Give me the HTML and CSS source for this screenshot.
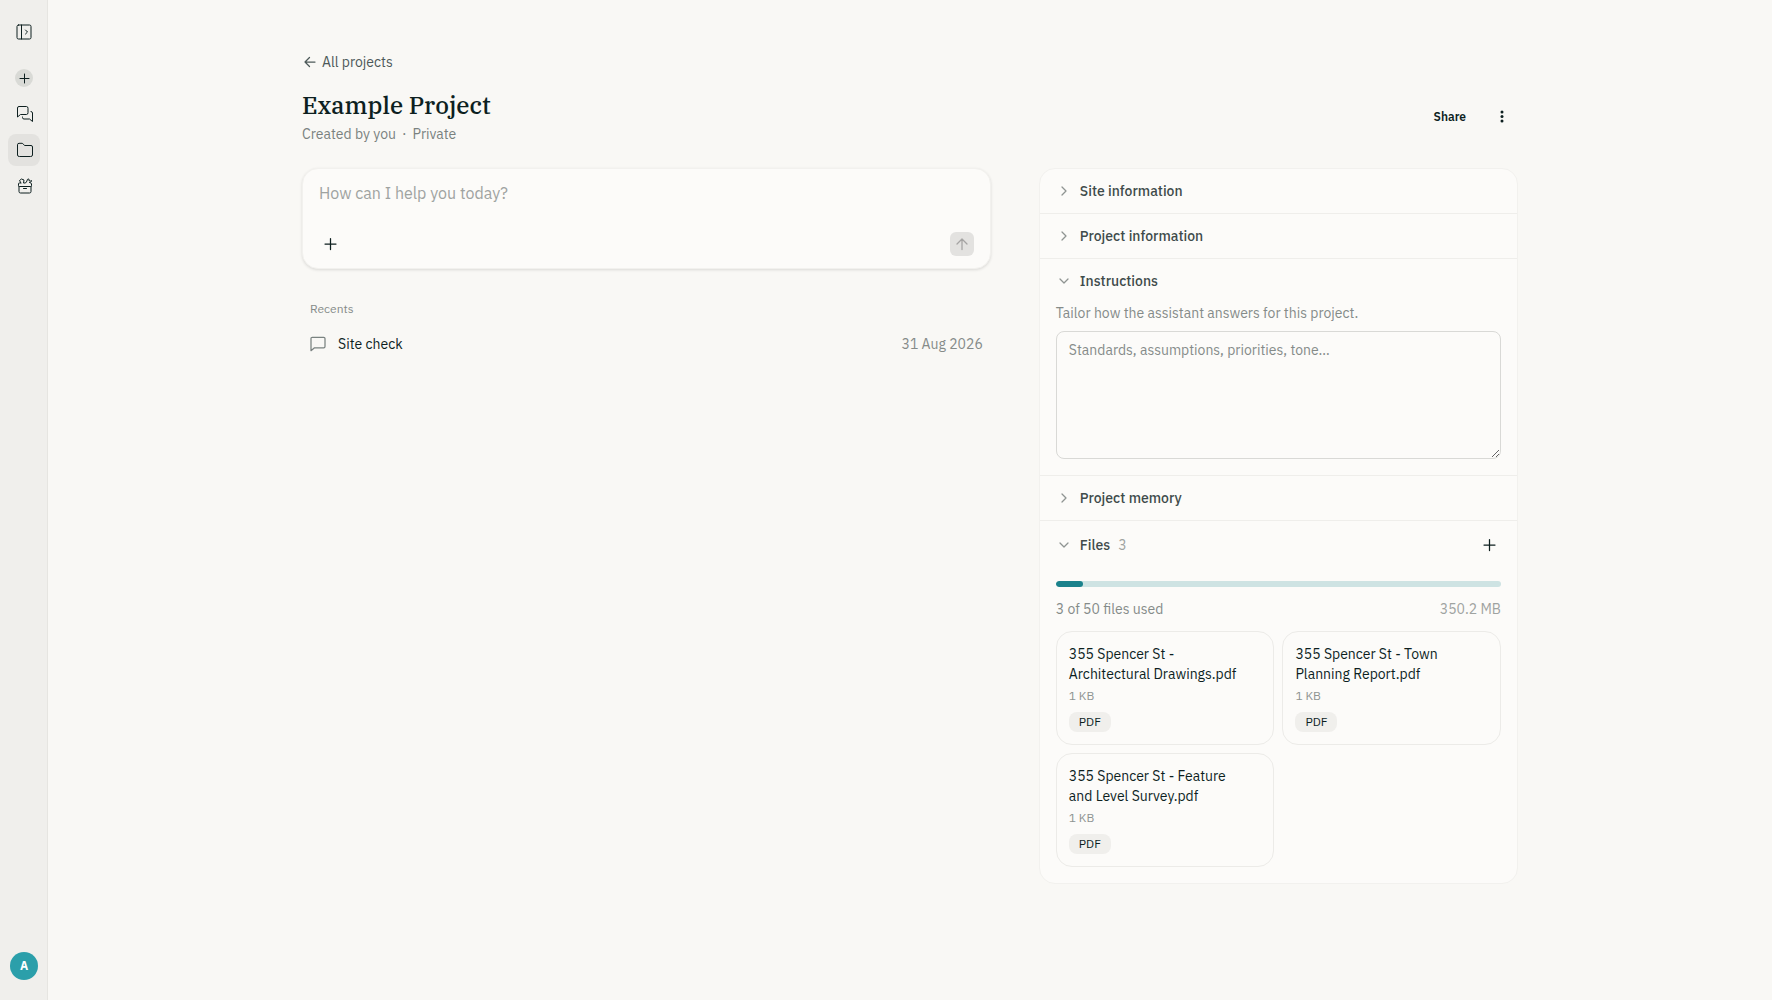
FILE: index.html
```html
<!DOCTYPE html>
<html lang="en">
<head>
<meta charset="utf-8">
<meta name="viewport" content="width=device-width, initial-scale=1">
<title>Example Project</title>
<link rel="stylesheet" href="styles.css">
</head>
<body>
<div class="app">
  <nav class="sidebar" aria-label="Main">
    <button class="nav-btn nav-toggle" type="button" aria-label="Open sidebar">
      <svg class="icon" width="18" height="18" viewBox="0 0 18 18"><rect x="2" y="2" width="14" height="14" rx="1.500"/><path d="M6.500 2v14M10.500 7l2 2-2 2"/></svg>
    </button>
    <button class="nav-btn" type="button" aria-label="New chat">
      <span class="new-dot"><svg class="icon" width="18" height="18" viewBox="0 0 18 18"><path d="M9.500 5v9M5 9.500h9"/></svg></span>
    </button>
    <a class="nav-btn" href="#chats" aria-label="Chats">
      <svg class="icon" width="18" height="18" viewBox="0 0 18 18"><path d="M13 8a1.500 1.500 0 0 1-1.500 1.500H5.500L2.500 12V3A1.500 1.500 0 0 1 4 1.500H11.500A1.500 1.500 0 0 1 13 3zM16 6.500A1.500 1.500 0 0 1 17.500 8v8.500l-3-2.500H9A1.500 1.500 0 0 1 7.500 12.500V12"/></svg>
    </a>
    <a class="nav-btn nav-active" href="#projects" aria-label="Projects" aria-current="page">
      <svg class="icon" width="18" height="18" viewBox="0 0 18 18"><path d="M16 15.500a1.500 1.500 0 0 0 1.500-1.500V6A1.500 1.500 0 0 0 16 4.500H10a1.500 1.500 0 0 1-1.200-.7L8.200 3A1.500 1.500 0 0 0 7 2.300H4A1.500 1.500 0 0 0 2.500 3.800V14A1.500 1.500 0 0 0 4 15.500z"/></svg>
    </a>
    <a class="nav-btn" href="#toolbox" aria-label="Toolbox">
      <svg class="icon" width="18" height="18" viewBox="0 0 18 18"><path d="M4 9.500v5A1.500 1.500 0 0 0 5.500 16h9a1.500 1.500 0 0 0 1.500-1.500v-5M8.500 11.500h3M5.500 6H4.300a.8.8 0 0 0-.8.800V8.700a.8.8 0 0 0 .8.800h11.400a.8.8 0 0 0 .8-.8V6.800a.8.8 0 0 0-.8-.8M6 6L4.500 3.500l2-1.500L9 3l-.5 3h2l1.500-2c0-1.700 1-2.300 2-1.800v1.500l1.500.3 1-.5c.2 1.200-.6 2-2 2"/></svg>
    </a>
    <button class="avatar" type="button" aria-label="Account">A</button>
  </nav>

  <main class="page">
    <a class="back" href="#projects">
      <svg class="icon" width="16" height="16" viewBox="0 0 16 16"><path d="M13 8H3M7.500 3.500L3 8l4.500 4.500"/></svg>
      All projects
    </a>
    <header class="head">
      <div>
        <h1 class="title">Example Project</h1>
        <p class="meta"><span>Created by you</span><span>·</span><span>Private</span></p>
      </div>
      <div class="actions">
        <button class="share" type="button">Share</button>
        <button class="icon-btn" type="button" aria-label="More options">
          <svg width="16" height="16" viewBox="0 0 16 16" fill="currentColor"><circle cx="8" cy="3" r="1.500"/><circle cx="8" cy="7.500" r="1.500"/><circle cx="8" cy="12" r="1.500"/></svg>
        </button>
      </div>
    </header>

    <div class="columns">
      <section class="main-col">
        <form class="composer">
          <textarea class="prompt" rows="1" aria-label="Message" placeholder="How can I help you today?"></textarea>
          <div class="composer-bar">
            <button class="icon-btn" type="button" aria-label="Add attachment">
              <svg class="icon" width="16" height="16" viewBox="0 0 16 16"><path d="M7.500 2.500v11M2 8h11"/></svg>
            </button>
            <button class="send" type="submit" aria-label="Send" disabled>
              <svg class="icon" width="16" height="16" viewBox="0 0 16 16"><path d="M8 13.500V3M3 8l5-5 5 5"/></svg>
            </button>
          </div>
        </form>
        <h2 class="recents-title">Recents</h2>
        <a class="recent" href="#site-check">
          <svg class="icon recent-icon" width="16" height="16" viewBox="0 0 16 16"><path d="M15 10.500a1.300 1.300 0 0 1-1.300 1.300H4.500L1 14.700V2.600a1.300 1.300 0 0 1 1.300-1.300h11.400A1.300 1.300 0 0 1 15 2.600z"/></svg>
          <span class="recent-name">Site check</span>
          <time class="recent-date" datetime="2026-08-31">31 Aug 2026</time>
        </a>
      </section>

      <aside class="panel">
        <section class="section">
          <button class="toggle" type="button" aria-expanded="false"><svg class="icon chevron" width="16" height="16" viewBox="0 0 16 16"><path d="M6 4l4 4-4 4"/></svg>Site information</button>
        </section>
        <section class="section">
          <button class="toggle" type="button" aria-expanded="false"><svg class="icon chevron" width="16" height="16" viewBox="0 0 16 16"><path d="M6 4l4 4-4 4"/></svg>Project information</button>
        </section>
        <section class="section">
          <button class="toggle" type="button" aria-expanded="true"><svg class="icon chevron" width="16" height="16" viewBox="0 0 16 16"><path d="M4 6l4 4 4-4"/></svg>Instructions</button>
          <div class="section-body">
            <label class="hint" for="instructions">Tailor how the assistant answers for this project.</label>
            <textarea class="instructions" id="instructions" placeholder="Standards, assumptions, priorities, tone…"></textarea>
          </div>
        </section>
        <section class="section">
          <button class="toggle" type="button" aria-expanded="false"><svg class="icon chevron" width="16" height="16" viewBox="0 0 16 16"><path d="M6 4l4 4-4 4"/></svg>Project memory</button>
        </section>
        <section class="section">
          <div class="files-head">
            <button class="toggle" type="button" aria-expanded="true"><svg class="icon chevron" width="16" height="16" viewBox="0 0 16 16"><path d="M4 6l4 4 4-4"/></svg>Files <span class="count">3</span></button>
            <button class="icon-btn" type="button" aria-label="Add file">
              <svg class="icon" width="16" height="16" viewBox="0 0 16 16"><path d="M7.500 2.500v11M2 8h11"/></svg>
            </button>
          </div>
          <div class="section-body files-body">
            <div class="bar" role="progressbar" aria-label="Files used" aria-valuemin="0" aria-valuemax="50" aria-valuenow="3"><div class="bar-fill" style="width: 6%"></div></div>
            <div class="usage"><span>3 of 50 files used</span><span class="size">350.2 MB</span></div>
            <ul class="files">
              <li class="file"><span class="file-name">355 Spencer St - Architectural Drawings.pdf</span><span class="file-size">1 KB</span><span class="tag">PDF</span></li>
              <li class="file"><span class="file-name">355 Spencer St - Town Planning Report.pdf</span><span class="file-size">1 KB</span><span class="tag">PDF</span></li>
              <li class="file"><span class="file-name">355 Spencer St - Feature and Level Survey.pdf</span><span class="file-size">1 KB</span><span class="tag">PDF</span></li>
            </ul>
          </div>
        </section>
      </aside>
    </div>
  </main>
</div>
</body>
</html>
```
FILE: styles.css
```css
*, *::before, *::after { box-sizing: border-box; }

body {
  margin: 0;
  background: #f9f8f5;
  color: #0d1f1f;
  font-family: "IBM Plex Sans", "Liberation Sans", Arial, sans-serif;
  font-size: 14px;
  line-height: 20px;
}

h1, h2, p, ul { margin: 0; padding: 0; font-weight: 400; }
ul { list-style: none; }
a { color: inherit; text-decoration: none; }
svg { display: block; flex: none; }

button, textarea { font: inherit; color: inherit; }
button { padding: 0; border: 0; background: none; cursor: pointer; }

.icon {
  fill: none;
  stroke: currentColor;
  stroke-width: 1.25;
  stroke-linecap: round;
  stroke-linejoin: round;
}

.app { display: flex; min-height: 100vh; }

/* Sidebar */
.sidebar {
  flex: none;
  display: flex;
  flex-direction: column;
  align-items: center;
  gap: 4px;
  width: 48px;
  padding: 16px 0 20px;
  background: #f0efec;
  box-shadow: inset -1px 0 #e6e5e1;
}
.nav-btn {
  display: grid;
  place-items: center;
  width: 32px;
  height: 32px;
  border-radius: 8px;
}
.nav-btn .icon { stroke-width: 1; }
.nav-toggle { margin-bottom: 10px; }
.nav-active { background: #e3e2df; }
.new-dot { border-radius: 50%; background: #d9dad6; }
.avatar {
  width: 28px;
  height: 28px;
  margin-top: auto;
  border-radius: 50%;
  background: #2b9faa;
  color: #fff;
  font-size: 12px;
  font-weight: 700;
}

/* Page header */
.page {
  flex: 1;
  min-width: 0;
  max-width: 1280px;
  margin: 0 auto;
  padding: 52px 32px;
}
.back {
  display: inline-flex;
  align-items: center;
  gap: 4px;
  color: #4d5959;
}
.head {
  display: flex;
  justify-content: space-between;
  align-items: center;
  margin: 14px 0 24px;
}
.title {
  margin-bottom: 3px;
  font-family: "IBM Plex Serif", "Noto Serif", "Liberation Serif", serif;
  font-size: 24px;
  font-weight: 500;
  line-height: 32px;
}
.meta { display: flex; gap: 6px; color: #7a8280; }
.actions { display: flex; align-items: center; gap: 12px; }
.share { padding: 0 8px; font-size: 12px; font-weight: 600; }
.icon-btn {
  display: grid;
  place-items: center;
  width: 32px;
  height: 32px;
  border-radius: 8px;
}

.columns {
  display: grid;
  grid-template-columns: minmax(0, 23fr) minmax(0, 16fr);
  align-items: start;
  gap: 48px;
}

/* Composer */
.composer {
  padding: 12px 16px 6px;
  border: 1px solid #f2f1ee;
  border-radius: 16px;
  background: #fcfbf9;
  box-shadow: 0 1px 3px rgba(0, 0, 0, 0.12);
}
.prompt {
  display: block;
  width: 100%;
  height: 45px;
  padding: 0;
  border: 0;
  outline: 0;
  background: none;
  resize: none;
  font-size: 16px;
  line-height: 24px;
}
.prompt::placeholder { color: #9fa3a1; }
.composer-bar {
  display: flex;
  justify-content: space-between;
  align-items: center;
  height: 36px;
}
.composer-bar .icon-btn { width: 24px; }
.send {
  display: grid;
  place-items: center;
  width: 24px;
  height: 24px;
  border-radius: 6px;
  background: #e3e2e0;
  color: #a5a4a3;
}

.recents-title {
  padding: 0 8px;
  margin: 32px 0 9px;
  color: #858b89;
  font-size: 12px;
  line-height: 16px;
}
.recent {
  display: flex;
  align-items: center;
  gap: 12px;
  padding: 8px;
}
.recent-icon { color: #7a8280; }
.recent-name { flex: 1; }
.recent-date { color: #858b89; }

/* Project panel */
.panel {
  border: 1px solid #f2f1ee;
  border-radius: 16px;
  background: #fcfbf9;
}
.section + .section { border-top: 1px solid #efeeeb; }
.toggle {
  display: flex;
  align-items: center;
  gap: 8px;
  width: 100%;
  height: 44px;
  padding: 0 16px;
  color: #3f4b4b;
  font-weight: 500;
  text-align: left;
}
.chevron { color: #8f9492; }
.section-body { padding: 0 16px 16px; }
.hint { display: block; margin-bottom: 8px; color: #858b89; }
.instructions {
  display: block;
  width: 100%;
  height: 128px;
  padding: 8px 12px;
  border: 1px solid #d9d9d6;
  border-radius: 8px;
  background: transparent;
  resize: vertical;
}
.instructions::placeholder { color: #858b89; }
.files-head {
  display: flex;
  align-items: center;
  height: 48px;
  padding-right: 12px;
}
.count { color: #9fa3a1; font-weight: 400; }
.bar {
  height: 6px;
  overflow: hidden;
  border-radius: 3px;
  background: #cee3e3;
}
.bar-fill { height: 100%; border-radius: 3px; background: #1b828c; }
.files-body { padding-top: 12px; }
.usage {
  display: flex;
  justify-content: space-between;
  margin: 12px 0;
  color: #858b89;
}
.size { color: #9fa3a1; }
.files {
  display: grid;
  grid-template-columns: repeat(2, minmax(0, 1fr));
  gap: 8px;
}
.file {
  display: flex;
  flex-direction: column;
  align-items: flex-start;
  padding: 12px 28px 12px 12px;
  border: 1px solid #ecebe8;
  border-radius: 16px;
}
.file-size {
  margin: 4px 0 8px;
  color: #8f9492;
  font-size: 12px;
  line-height: 16px;
}
.tag {
  padding: 0 10px;
  border-radius: 8px;
  background: #f0efec;
  font-size: 12px;
}
```
